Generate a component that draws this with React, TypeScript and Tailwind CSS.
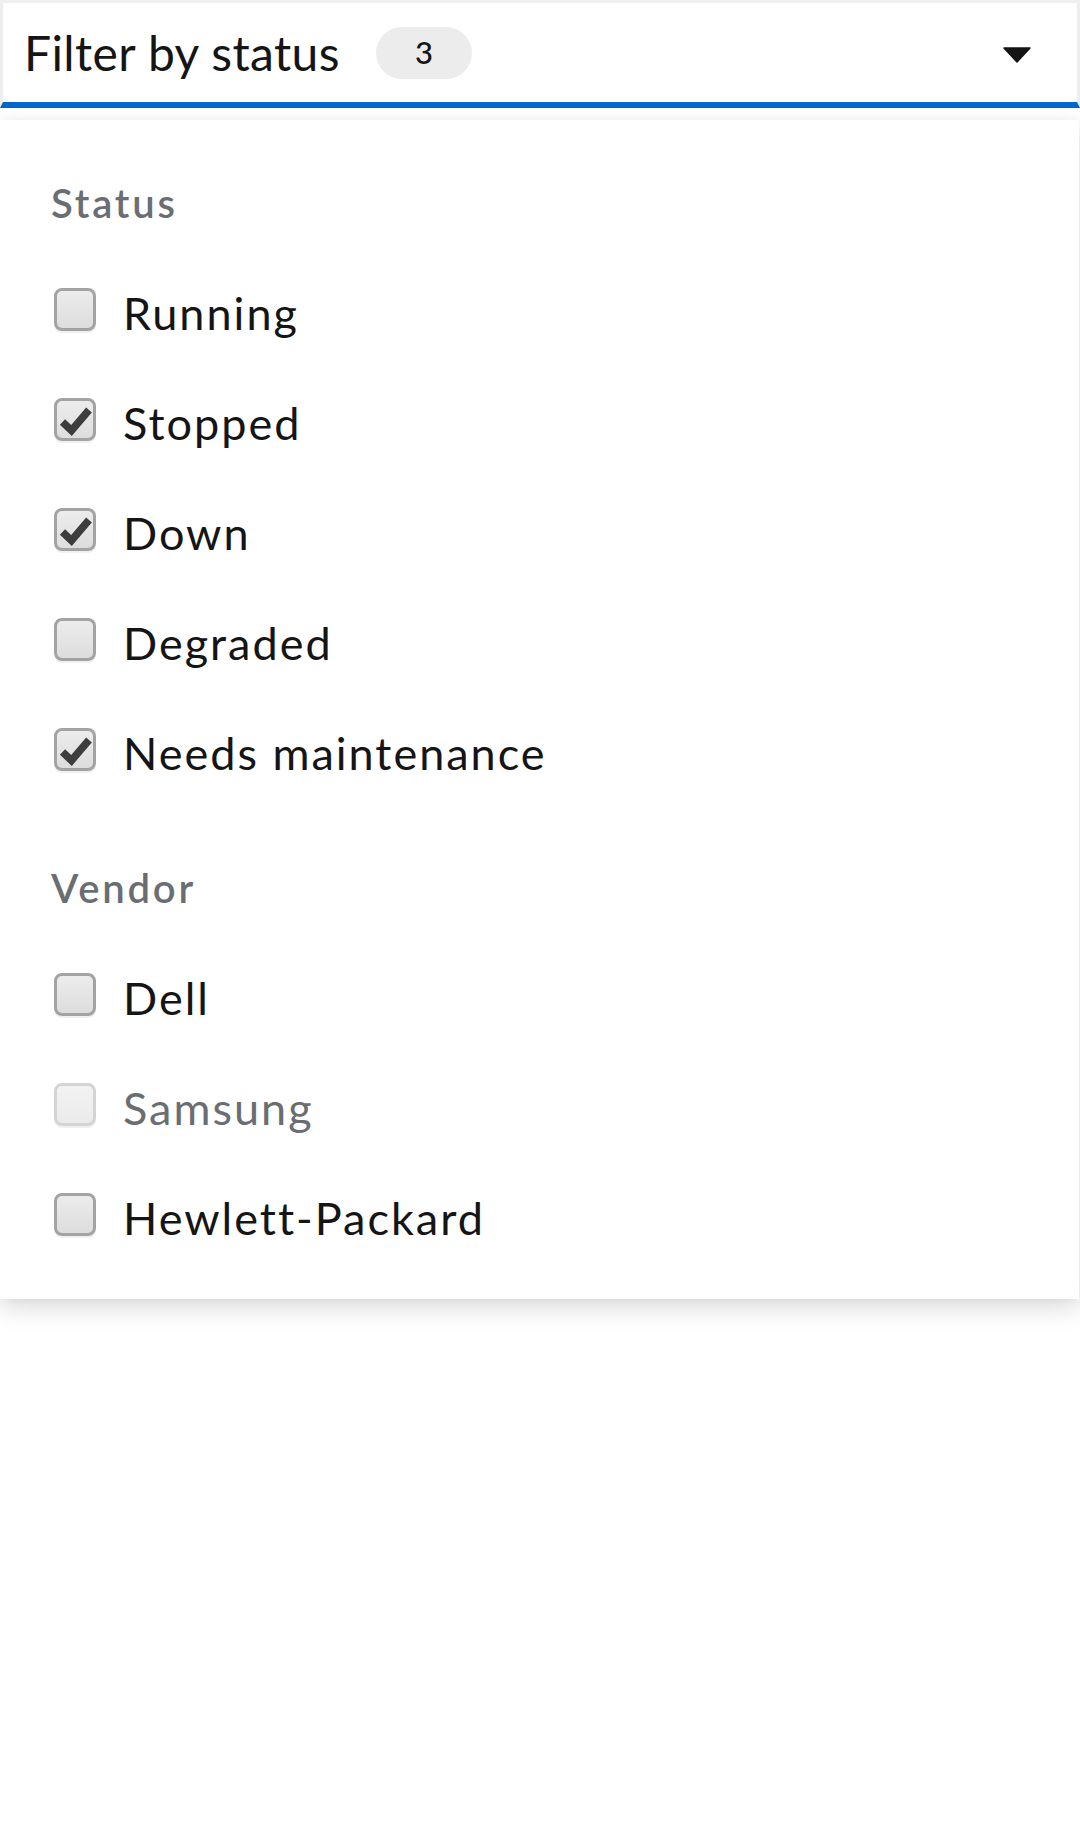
import React from "react";

type Item = { label: string; checked?: boolean; disabled?: boolean };

const groups: { title: string; items: Item[] }[] = [
  {
    title: "Status",
    items: [
      { label: "Running" },
      { label: "Stopped", checked: true },
      { label: "Down", checked: true },
      { label: "Degraded" },
      { label: "Needs maintenance", checked: true },
    ],
  },
  {
    title: "Vendor",
    items: [
      { label: "Dell" },
      { label: "Samsung", disabled: true },
      { label: "Hewlett-Packard" },
    ],
  },
];

function Checkbox({ checked, disabled }: { checked?: boolean; disabled?: boolean }) {
  return (
    <div
      className={
        "relative mb-[8px] h-[43px] w-[42px] shrink-0 rounded-[8px] border-[3px] shadow-[0_2px_0_#f0f0f0] " +
        (disabled
          ? "border-[#d4d4d4] bg-gradient-to-b from-[#f2f2f2] to-[#ebebeb]"
          : "border-[#a3a3a3] bg-gradient-to-b from-[#ececec] to-[#dddddd]")
      }
    >
      {checked && (
        <svg
          width="42"
          height="43"
          viewBox="0 0 42 43"
          className="absolute left-[-3px] top-[-3px] block"
        >
          <polyline
            points="8.5,24 17.5,32.5 35,12"
            fill="none"
            stroke="#3d3d3d"
            strokeWidth="7.5"
            strokeLinejoin="miter"
          />
        </svg>
      )}
    </div>
  );
}

export default function App() {
  return (
    <div
      className="min-h-[1836px] w-full bg-white text-[#151515]"
      style={{ fontFamily: "Lato, 'Open Sans', sans-serif" }}
    >
      <div className="flex h-[108px] w-full items-center border-[3px] border-b-[6px] border-[#eeeeee] border-b-[#0066cc] pl-[21px] pr-[46px]">
        <span className="text-[48px] leading-none tracking-[0.4px]">Filter by status</span>
        <span className="ml-[36px] flex h-[52px] w-[96px] items-center justify-center rounded-full bg-[#ececec] text-[31px] font-medium leading-none">
          3
        </span>
        <span className="flex-1" />
        <svg width="28" height="16" viewBox="0 0 28 16" className="mt-[4px]">
          <path d="M1 1 L27 1 L14 15 Z" fill="#151515" stroke="#151515" strokeWidth="1.5" strokeLinejoin="round" />
        </svg>
      </div>

      <div className="mt-[12px] w-[1079px] bg-white pb-[26px] pt-[53px] shadow-[0_11px_23px_0_rgba(3,3,3,0.12),0_0_11px_0_rgba(3,3,3,0.06)]">
        {groups.map((g, gi) => (
          <div key={g.title} className={gi > 0 ? "mt-[50px]" : ""}>
            <div className="mb-[25px] flex h-[60px] items-center pl-[51px] text-[40px] font-semibold leading-none tracking-[2.8px] text-[#6a6e73]">
              {g.title}
            </div>
            {g.items.map((it) => (
              <div key={it.label} className="flex h-[110px] items-center pl-[54px]">
                <Checkbox checked={it.checked} disabled={it.disabled} />
                <span
                  className={
                    "ml-[27px] text-[45px] leading-none tracking-[2px] " +
                    (it.disabled ? "text-[#6a6e73]" : "text-[#151515]")
                  }
                >
                  {it.label}
                </span>
              </div>
            ))}
          </div>
        ))}
      </div>
    </div>
  );
}
